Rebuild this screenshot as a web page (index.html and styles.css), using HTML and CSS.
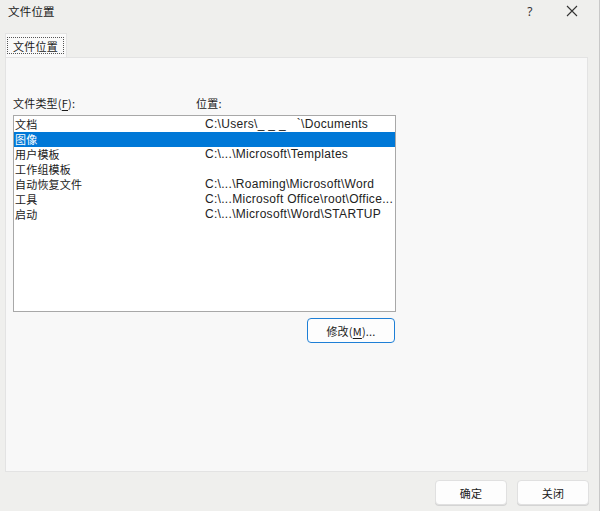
FILE: index.html
```html
<!DOCTYPE html>
<html lang="zh-CN">
<head>
<meta charset="utf-8">
<title>文件位置</title>
<link rel="stylesheet" href="styles.css">
</head>
<body>
<div class="dialog">
  <div class="titlebar">
    <span class="title">文件位置</span>
    <span class="help">?</span>
    <span class="close">
      <svg width="12" height="12" viewBox="0 0 12 12"><path d="M1 1 L11 11 M11 1 L1 11" stroke="#333" stroke-width="1.1" fill="none"/></svg>
    </span>
  </div>
  <div class="tabs">
    <div class="tab"><span class="focus">文件位置</span></div>
  </div>
  <div class="panel">
    <div class="labels">
      <span class="lab-type">文件类型(<u>F</u>):</span>
      <span class="lab-loc">位置:</span>
    </div>
    <div class="listbox">
      <div class="row"><span class="c1">文档</span><span class="c2">C:\Users\_ _ _&nbsp;&nbsp;&nbsp;`\Documents</span></div>
      <div class="row sel"><span class="c1">图像</span><span class="c2"></span></div>
      <div class="row"><span class="c1">用户模板</span><span class="c2">C:\...\Microsoft\Templates</span></div>
      <div class="row"><span class="c1">工作组模板</span><span class="c2"></span></div>
      <div class="row"><span class="c1">自动恢复文件</span><span class="c2">C:\...\Roaming\Microsoft\Word</span></div>
      <div class="row"><span class="c1">工具</span><span class="c2">C:\...Microsoft Office\root\Office...</span></div>
      <div class="row"><span class="c1">启动</span><span class="c2">C:\...\Microsoft\Word\STARTUP</span></div>
    </div>
    <div class="modify-row">
      <button class="btn primary">修改(<u>M</u>)...</button>
    </div>
  </div>
  <div class="footer">
    <button class="btn foot">确定</button>
    <button class="btn foot">关闭</button>
  </div>
</div>
</body>
</html>
```
FILE: styles.css
```css
html, body {
  margin: 0;
  padding: 0;
}
body {
  width: 600px;
  height: 511px;
  overflow: hidden;
  background: #efefed;
  font-family: "Noto Sans CJK SC", sans-serif;
  font-size: 11px;
  letter-spacing: 0.2px;
  color: #1a1a1a;
}
.dialog {
  width: 600px;
  height: 511px;
  display: flex;
  flex-direction: column;
  box-sizing: border-box;
  border-right: 1px solid #c8c8c8;
}
.titlebar {
  height: 24px;
  display: flex;
  align-items: center;
  padding-left: 8px;
  box-sizing: border-box;
}
.title {
  font-size: 11.5px;
  flex: 1;
  line-height: 14px;
  margin-top: -2px;
}
.help {
  width: 14px;
  text-align: center;
  margin-right: 29px;
  font-family: "Noto Sans", sans-serif;
  font-size: 12px;
  color: #333;
  margin-top: -2px;
}
.close {
  width: 12px;
  height: 12px;
  margin-right: 21px;
  display: flex;
  margin-top: -2px;
}
.tabs {
  padding: 9px 0 0 5px;
  height: 33px;
  box-sizing: border-box;
  display: flex;
  align-items: flex-end;
}
.tab {
  width: 62px;
  height: 24px;
  background: #f9f9f9;
  border-top: 1px solid #e3e3e3;
  border-left: 1px solid #e3e3e3;
  border-right: 1px solid #e3e3e3;
  box-sizing: border-box;
  display: flex;
  align-items: center;
  padding-left: 1px;
}
.focus {
  border: 1px dotted #555;
  line-height: 14px;
  height: 17px;
  width: 57px;
  box-sizing: border-box;
  display: inline-flex;
  align-items: center;
  justify-content: center;
  white-space: nowrap;
}
.panel {
  margin: 0 11px 0 5px;
  height: 415px;
  background: #f8f8f8;
  border: 1px solid #e3e3e3;
  box-sizing: border-box;
  padding: 33px 0 0 7px;
}
.labels {
  height: 24px;
  display: flex;
  align-items: center;
}
.lab-type { width: 183px; }
.listbox {
  width: 383px;
  height: 197px;
  box-sizing: border-box;
  border: 1px solid #a8a8a8;
  background: #fff;
  padding-top: 1px;
}
.row {
  height: 15px;
  display: flex;
  align-items: center;
  line-height: 15px;
  white-space: nowrap;
}
.row.sel {
  background: #0078d7;
  color: #fff;
}
.c1 {
  width: 190px;
  padding-left: 1px;
  flex: none;
}
.c2 {
  font-family: "Liberation Sans", sans-serif;
  font-size: 12px;
  color: #222;
  letter-spacing: 0.3px;
}
.modify-row {
  width: 383px;
  display: flex;
  justify-content: flex-end;
  padding-top: 6px;
}
.btn {
  font-family: "Noto Sans CJK SC", sans-serif;
  font-size: 11px;
  letter-spacing: 0.2px;
  color: #1a1a1a;
  background: #fdfdfd;
  border: 1px solid #d0d0d0;
  border-radius: 4px;
  box-sizing: border-box;
  padding: 0;
  display: flex;
  align-items: center;
  justify-content: center;
}
.btn.primary {
  width: 88px;
  height: 25px;
  border: 1px solid #1e7fd6;
  margin-right: 1px;
}
.footer {
  display: flex;
  justify-content: flex-end;
  gap: 10px;
  padding: 8px 10px 0 0;
}
.btn.foot {
  width: 72px;
  height: 25px;
  border-color: #e0e0e0;
  box-shadow: 0 1px 0 #d4d4d4;
}
u { text-decoration: underline; text-underline-offset: 2px; }
```
